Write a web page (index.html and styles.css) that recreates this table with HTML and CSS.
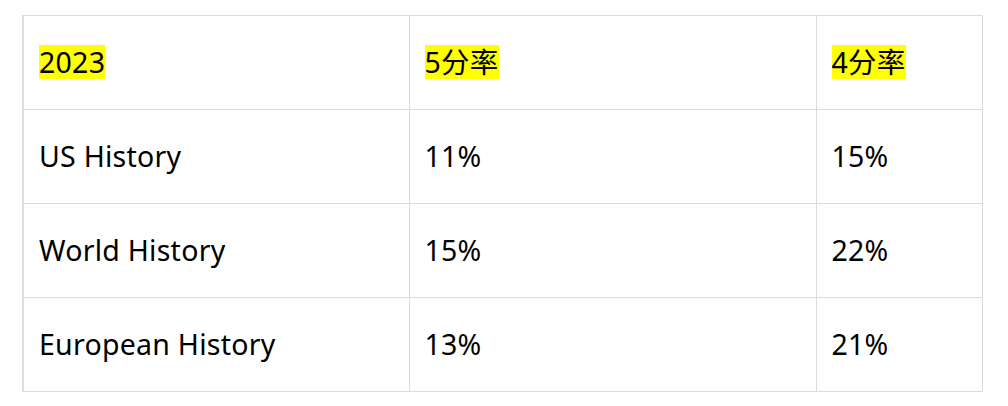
FILE: index.html
```html
<!DOCTYPE html>
<html lang="zh">
<head>
<meta charset="utf-8">
<link rel="stylesheet" href="styles.css">
</head>
<body>
<table class="grid">
  <colgroup>
    <col class="c1"><col class="c2"><col class="c3">
  </colgroup>
  <tr>
    <td><span class="hl">2023</span></td>
    <td><span class="hl">5分率</span></td>
    <td><span class="hl">4分率</span></td>
  </tr>
  <tr>
    <td>US History</td>
    <td>11%</td>
    <td>15%</td>
  </tr>
  <tr>
    <td>World History</td>
    <td>15%</td>
    <td>22%</td>
  </tr>
  <tr>
    <td>European History</td>
    <td>13%</td>
    <td>21%</td>
  </tr>
</table>
</body>
</html>
```
FILE: styles.css
```css
html, body {
  margin: 0;
  padding: 0;
  background: #fff;
}
body {
  padding: 15px 0 0 22px;
  font-family: "Noto Sans", "Noto Sans CJK SC", sans-serif;
  font-size: 28.5px;
  letter-spacing: 0.25px;
  color: #000;
}
.grid {
  border-collapse: collapse;
  table-layout: fixed;
  width: 959px;
}
.c1 { width: 386px; }
.c2 { width: 407px; }
.c3 { width: 166px; }
.grid td {
  border: 1px solid #dcdcdc;
  height: 94px;
  padding: 0 15px 2px;
  box-sizing: border-box;
  vertical-align: middle;
  line-height: 34px;
}
.grid td:first-child {
  border-left: 2px solid #dcdcdc;
}
.hl {
  display: inline-block;
  background: #ffff00;
  line-height: 34px;
}
```
